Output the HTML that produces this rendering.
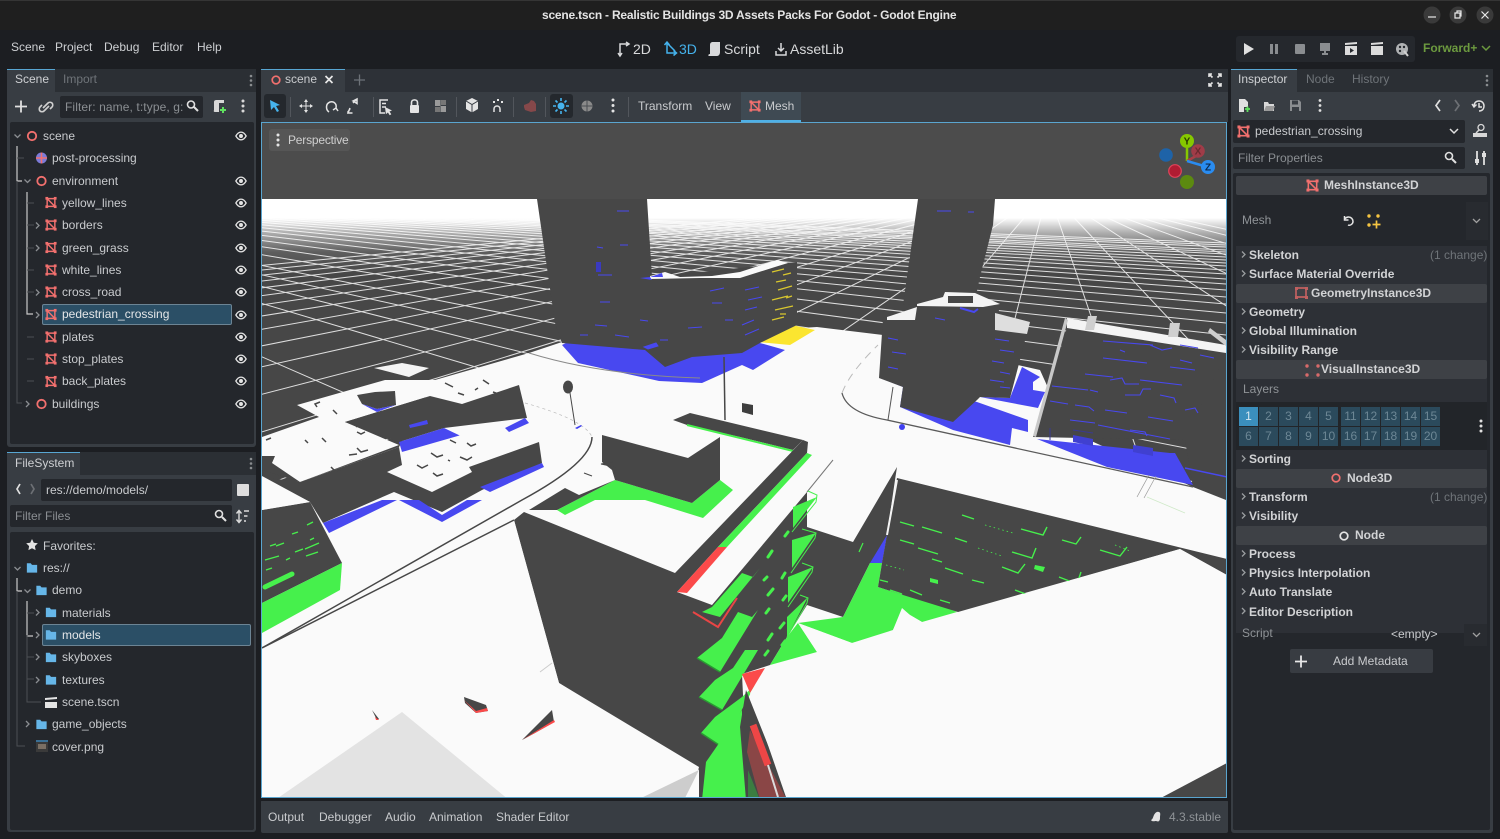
<!DOCTYPE html>
<html><head><meta charset="utf-8"><title>scene.tscn - Godot Engine</title>
<style>
html,body{margin:0;padding:0;background:#1c1e22;width:1500px;height:839px;overflow:hidden}
#r{position:relative;width:1500px;height:839px;overflow:hidden;font-family:"Liberation Sans",sans-serif;font-size:12px;color:#ced0d3}
.b{position:absolute}
.t{position:absolute;white-space:nowrap;line-height:16px;height:16px}
.d{color:#6f7479}
.h{font-weight:bold;color:#d2d3d5;font-size:12px}
.c{color:#c9cbce}
svg{position:absolute;overflow:visible}
.cell{position:absolute;width:19px;height:19px;background:#2b4a5c;color:#6d8795;text-align:center;line-height:19px;font-size:12px}
.cat{position:absolute;left:1236px;width:251px;height:19px;background:#3e4146;border-radius:2px}
</style></head><body><div id="r">

<!-- title + menu backgrounds -->
<div class="b" style="left:0;top:0;width:1500px;height:30px;background:#1f1f1f;border-top:1px solid #353535;box-sizing:border-box"></div>
<div class="t" style="left:542px;top:7px;font-weight:bold;color:#e4e4e4;font-size:12px;letter-spacing:-.21px">scene.tscn - Realistic Buildings 3D Assets Packs For Godot - Godot Engine</div>
<svg style="left:0;top:0" width="1500" height="30">
<g fill="#3a3a3a"><circle cx="1432" cy="15" r="8.5"/><circle cx="1458" cy="15" r="8.5"/><circle cx="1485" cy="15" r="8.5"/></g>
<g stroke="#e8e8e8" stroke-width="1.2" fill="none"><path d="M1428 17h8"/><path d="M1455 13h5v5h-5zM1457 13v-2h4v5h-1"/><path d="M1481.500 11.500l7 7M1488.500 11.500l-7 7"/></g>
</svg>
<div class="t" style="left:11px;top:39px">Scene</div>
<div class="t" style="left:55px;top:39px">Project</div>
<div class="t" style="left:104px;top:39px">Debug</div>
<div class="t" style="left:152px;top:39px">Editor</div>
<div class="t" style="left:197px;top:39px">Help</div>
<div class="t" style="left:633px;top:41px;font-size:14px;color:#d8d9db">2D</div>
<div class="t" style="left:679px;top:41px;font-size:14px;color:#45b2ec">3D</div>
<div class="t" style="left:724px;top:41px;font-size:14px;color:#d8d9db">Script</div>
<div class="t" style="left:790px;top:41px;font-size:14px;color:#d8d9db">AssetLib</div>
<svg style="left:610px;top:40px" width="240" height="20">
<g fill="none" stroke="#d8d9db" stroke-width="1.500"><path d="M10 15V4h8M16 2l3 2-3 2M8 13l2 3 2-3"/></g>
<g fill="none" stroke="#45b2ec" stroke-width="1.500"><path d="M57 3v10h9M54.500 5L57 2l2.500 3M63.500 10.500l3 2.500-3 2.500M58 4l7 7"/></g>
<path d="M100 14V5c0-2 1-3 3-3h7v10c0 2-1 4-3 4h-8c-1 0-1-2 1-2z" fill="#d8d9db"/>
<path d="M171 3v8M168 8l3 3 3-3M166 11v4h10v-4" fill="none" stroke="#d8d9db" stroke-width="1.500"/>
</svg>

<div class="b" style="left:1236px;top:36px;width:179px;height:26px;background:#25282d;border-radius:3px"></div>
<svg style="left:1240px;top:40px" width="175" height="18">
<path d="M4 3l10 6-10 6z" fill="#e0e0e0"/>
<path d="M30 4h3v10h-3zM35 4h3v10h-3z" fill="#8a8d90"/>
<rect x="55" y="4" width="10" height="10" rx="1" fill="#8a8d90"/>
<path d="M80 3h10v8h-4v2h2v2h-6v-2h2v-2h-4z" fill="#8a8d90"/>
<path d="M105 6h12v9h-12zM105 3l12-1v2l-12 1zM110 8v5l4-2.500z" fill="#dcdcdc"/>
<path d="M131 6h12v9h-12zM131 3l12-1v2l-12 1z" fill="#dcdcdc"/>
<circle cx="162" cy="9" r="6" fill="#b0b2b4"/><circle cx="160" cy="7" r="1.200" fill="#25282d"/><circle cx="164" cy="7" r="1.200" fill="#25282d"/><circle cx="160" cy="11" r="1.200" fill="#25282d"/><path d="M164 11l4 5" stroke="#d0d0d0" stroke-width="2"/>
</svg>
<div class="t" style="left:1423px;top:40px;font-weight:bold;color:#6c9a3f;font-size:12px">Forward+</div>
<svg style="left:1481px;top:45px" width="10" height="8"><path d="M1 1l4 4 4-4" fill="none" stroke="#6c9a3f" stroke-width="1.500"/></svg>

<!-- LEFT DOCK SCENE -->
<div class="b" style="left:7px;top:69px;width:249px;height:378px;background:#383d43;border-radius:3px"></div>
<div class="b" style="left:7px;top:69px;width:249px;height:23px;background:#2b2f34"></div>
<div class="b" style="left:7px;top:69px;width:48px;height:23px;background:#383d43;border-top:1px solid #58a6d2;box-sizing:border-box"></div>
<div class="t" style="left:15px;top:71px">Scene</div>
<div class="t d" style="left:63px;top:71px">Import</div>
<svg style="left:248px;top:74px" width="6" height="14"><g fill="#8a8d90"><circle cx="3" cy="2" r="1.300"/><circle cx="3" cy="6.500" r="1.300"/><circle cx="3" cy="11" r="1.300"/></g></svg>
<div class="b" style="left:60px;top:96px;width:143px;height:22px;background:#24272c;border-radius:2px"></div>
<div class="t d" style="left:65px;top:99px;color:#8a8e92;letter-spacing:.1px">Filter: name, t:type, g:</div>
<svg style="left:14px;top:98px" width="235" height="18">
<path d="M1 8.500h12M7 2.500v12" stroke="#e0e0e0" stroke-width="1.800"/>
<path d="M27 10l5-5c1-1 3-1 4 0s1 3 0 4l-2 2M33 8l-5 5c-1 1-3 1-4 0s-1-3 0-4l2-2" transform="translate(2 0)" fill="none" stroke="#d0d0d0" stroke-width="1.600"/>
<circle cx="177" cy="6.500" r="3.500" fill="none" stroke="#e0e0e0" stroke-width="1.600"/><path d="M180 9l4 4" stroke="#e0e0e0" stroke-width="2"/>
<path d="M200 4c0-2 2-2 3-2h7v3h-5v9h-4c-2 0-1-2-1-2z" fill="#d8d8d8"/><path d="M206 12h6M209 9v6" stroke="#5fe05f" stroke-width="2"/>
<g fill="#d8d8d8"><circle cx="229" cy="3" r="1.500"/><circle cx="229" cy="8" r="1.500"/><circle cx="229" cy="13" r="1.500"/></g>
</svg>
<div class="b" style="left:10px;top:122px;width:244px;height:322px;background:#24272c;border-radius:2px"></div>
<div class="b" style="left:42px;top:304px;width:190px;height:21px;background:#2b4f66;border:1px solid #6c8494;box-sizing:border-box;border-radius:2px"></div>

<svg width="0" height="0" style="position:absolute">
<defs>
<symbol id="m" viewBox="0 0 14 14"><path d="M2.500 2.500h9v9h-9zM2.500 2.500l9 9" fill="none" stroke="#f2706e" stroke-width="1.700"/><g fill="#f2706e"><rect x="0.500" y="0.500" width="3.200" height="3.200"/><rect x="10.300" y="0.500" width="3.200" height="3.200"/><rect x="0.500" y="10.300" width="3.200" height="3.200"/><rect x="10.300" y="10.300" width="3.200" height="3.200"/></g></symbol>
<symbol id="e" viewBox="0 0 14 14"><path d="M1 7c2-3.500 4-4.500 6-4.500S11 3.500 13 7c-2 3.500-4 4.500-6 4.500S3 10.500 1 7z" fill="none" stroke="#e4e4e4" stroke-width="1.500"/><circle cx="7" cy="7" r="2.300" fill="#e4e4e4"/></symbol>
<symbol id="f" viewBox="0 0 14 14"><path d="M1 2h4.500l1.500 2h6v9H1z" fill="#66b6e8"/></symbol>
</defs></svg>

<svg style="left:0;top:122px" width="260" height="322">
<g stroke="#c9c9c9" stroke-width="1.200" fill="none"><path d="M17 24v35h5"/><path d="M27 70v122h6"/></g>
<g stroke="#4c4f53" fill="none"><path d="M17 36h7M17 59v222h5M27 81h7M27 103h7M27 126h7M27 148h7M27 170h7M27 215h7M27 237h7M27 259h7"/></g>
<g fill="none" stroke="#8b8e92" stroke-width="1.300"><path d="M14.500 12.500l3 3 3-3M24.500 57.500l3 3 3-3"/><path d="M36 100.500l3 3-3 3M36 123l3 3-3 3M36 167.500l3 3-3 3M36 190l3 3-3 3M26 279l3 3-3 3"/></g>
<g fill="none" stroke="#f2706e" stroke-width="1.800"><circle cx="32" cy="14" r="4.200"/><circle cx="41.500" cy="59" r="4.200"/><circle cx="41.500" cy="282" r="4.200"/></g>
<circle cx="41.500" cy="36" r="5.500" fill="#7c7bd8"/><path d="M36 36h11M41.500 30.500v11" stroke="#f2706e" stroke-width="1.500"/>
<g fill="none">
<use href="#m" x="45" y="74.500" width="12" height="12"/><use href="#m" x="45" y="97" width="12" height="12"/><use href="#m" x="45" y="119.500" width="12" height="12"/><use href="#m" x="45" y="142" width="12" height="12"/><use href="#m" x="45" y="164" width="12" height="12"/><use href="#m" x="45" y="186.500" width="12" height="12"/><use href="#m" x="45" y="209" width="12" height="12"/><use href="#m" x="45" y="231" width="12" height="12"/><use href="#m" x="45" y="253.500" width="12" height="12"/>
</g>
<g>
<use href="#e" x="235" y="8" width="12" height="12"/><use href="#e" x="235" y="53" width="12" height="12"/><use href="#e" x="235" y="75" width="12" height="12"/><use href="#e" x="235" y="97" width="12" height="12"/><use href="#e" x="235" y="120" width="12" height="12"/><use href="#e" x="235" y="142" width="12" height="12"/><use href="#e" x="235" y="164" width="12" height="12"/><use href="#e" x="235" y="187" width="12" height="12"/><use href="#e" x="235" y="209" width="12" height="12"/><use href="#e" x="235" y="231" width="12" height="12"/><use href="#e" x="235" y="253" width="12" height="12"/><use href="#e" x="235" y="276" width="12" height="12"/>
</g>
</svg>
<div class="t c" style="left:43px;top:128px">scene</div>
<div class="t c" style="left:52px;top:150px">post-processing</div>
<div class="t c" style="left:52px;top:173px">environment</div>
<div class="t c" style="left:62px;top:195px">yellow_lines</div>
<div class="t c" style="left:62px;top:217px">borders</div>
<div class="t c" style="left:62px;top:240px">green_grass</div>
<div class="t c" style="left:62px;top:262px">white_lines</div>
<div class="t c" style="left:62px;top:284px">cross_road</div>
<div class="t" style="left:62px;top:306px;color:#e4e6e8">pedestrian_crossing</div>
<div class="t c" style="left:62px;top:329px">plates</div>
<div class="t c" style="left:62px;top:351px">stop_plates</div>
<div class="t c" style="left:62px;top:373px">back_plates</div>
<div class="t c" style="left:52px;top:396px">buildings</div>

<!-- FILESYSTEM -->
<div class="b" style="left:7px;top:452px;width:249px;height:380px;background:#383d43;border-radius:3px"></div>
<div class="b" style="left:7px;top:452px;width:249px;height:23px;background:#2b2f34"></div>
<div class="b" style="left:7px;top:452px;width:73px;height:23px;background:#383d43;border-top:1px solid #58a6d2;box-sizing:border-box"></div>
<div class="t" style="left:15px;top:455px">FileSystem</div>
<svg style="left:248px;top:457px" width="6" height="14"><g fill="#8a8d90"><circle cx="3" cy="2" r="1.300"/><circle cx="3" cy="6.500" r="1.300"/><circle cx="3" cy="11" r="1.300"/></g></svg>
<div class="b" style="left:41px;top:479px;width:191px;height:22px;background:#24272c;border-radius:2px"></div>
<div class="t c" style="left:46px;top:482px">res://demo/models/</div>
<div class="b" style="left:237px;top:484px;width:12px;height:12px;background:#dedede;border-radius:1px"></div>
<div class="b" style="left:10px;top:505px;width:222px;height:22px;background:#24272c;border-radius:2px"></div>
<div class="t" style="left:15px;top:508px;color:#8a8e92">Filter Files</div>
<svg style="left:10px;top:482px" width="240" height="44">
<path d="M10 2l-3 5 3 5" fill="none" stroke="#e0e0e0" stroke-width="1.700"/><path d="M21 2l3 5-3 5" fill="none" stroke="#6d7075" stroke-width="1.700"/>
<circle cx="209" cy="32" r="3.500" fill="none" stroke="#e0e0e0" stroke-width="1.600"/><path d="M212 35l4 4" stroke="#e0e0e0" stroke-width="2"/>
<path d="M229 29v11M226.500 31.500l2.500-3 2.500 3M226.500 37.500l2.500 3 2.500-3M234 29h5M234 34h3.500M234 39h2" fill="none" stroke="#dcdcdc" stroke-width="1.400"/>
</svg>
<div class="b" style="left:10px;top:532px;width:244px;height:298px;background:#24272c;border-radius:2px"></div>
<div class="b" style="left:42px;top:624px;width:209px;height:22px;background:#2b4f66;border:1px solid #6c8494;box-sizing:border-box;border-radius:2px"></div>
<svg style="left:0;top:532px" width="260" height="298">
<g stroke="#c9c9c9" stroke-width="1.200" fill="none"><path d="M17 46v13h5"/><path d="M27 69v35h6"/></g>
<g stroke="#4c4f53" fill="none"><path d="M17 59v155h8M27 81h7M27 103v67h14M27 125h7M27 147h7"/></g>
<g fill="none" stroke="#8b8e92" stroke-width="1.300"><path d="M14.500 35l3 3 3-3M24.500 57.500l3 3 3-3"/><path d="M36 77.500l3 3-3 3M36 100l3 3-3 3M36 122l3 3-3 3M36 145l3 3-3 3M26 189l3 3-3 3"/></g>
<path d="M32 7l1.800 3.700 4 .6-2.900 2.800.7 4-3.600-1.900-3.600 1.900.7-4-2.900-2.800 4-.6z" fill="#e4e4e4"/>
<use href="#f" x="26" y="29.500" width="12" height="12"/><use href="#f" x="35.500" y="52" width="12" height="12"/>
<use href="#f" x="45" y="74" width="12" height="12"/><use href="#f" x="45" y="96.500" width="12" height="12"/><use href="#f" x="45" y="119" width="12" height="12"/><use href="#f" x="45" y="141.500" width="12" height="12"/>
<path d="M45 170h12v6H45zM45 166l12-1v2l-12 1z" fill="#e4e4e4"/>
<use href="#f" x="35.500" y="186" width="12" height="12"/>
<rect x="36" y="208" width="12" height="12" fill="#3a3a3a"/><rect x="36" y="208" width="12" height="2" fill="#3a6f95"/><rect x="38" y="212" width="8" height="5" fill="#7a6f64"/>
</svg>
<div class="t c" style="left:43px;top:538px">Favorites:</div>
<div class="t c" style="left:43px;top:560px">res://</div>
<div class="t c" style="left:52px;top:582px">demo</div>
<div class="t c" style="left:62px;top:605px">materials</div>
<div class="t" style="left:62px;top:627px;color:#e4e6e8">models</div>
<div class="t c" style="left:62px;top:649px">skyboxes</div>
<div class="t c" style="left:62px;top:672px">textures</div>
<div class="t c" style="left:62px;top:694px">scene.tscn</div>
<div class="t c" style="left:52px;top:716px">game_objects</div>
<div class="t c" style="left:52px;top:739px">cover.png</div>

<!-- CENTER TABS + TOOLBAR -->
<div class="b" style="left:261px;top:69px;width:967px;height:53px;background:#2d3137"></div>
<div class="b" style="left:261px;top:92px;width:967px;height:30px;background:#383d43"></div>
<div class="b" style="left:261px;top:69px;width:84px;height:23px;background:#383d43;border-top:1px solid #58a6d2;box-sizing:border-box"></div>
<svg style="left:261px;top:69px" width="110" height="23">
<circle cx="15" cy="11" r="3.800" fill="none" stroke="#f2706e" stroke-width="1.700"/>
<path d="M64.500 7l7 7M71.500 7l-7 7" stroke="#e8e8e8" stroke-width="1.700"/>
<path d="M93 11h11M98.500 5.500v11" stroke="#6d7278" stroke-width="1.300"/>
</svg>
<div class="t c" style="left:285px;top:71px">scene</div>
<svg style="left:1208px;top:73px" width="14" height="14"><path d="M1 4V1h3M10 1h3v3M13 10v3h-3M4 13H1v-3M1 1l3.500 3.500M13 1L9.500 4.500M13 13L9.500 9.500M1 13l3.500-3.500" fill="none" stroke="#e4e4e4" stroke-width="1.600"/></svg>
<div class="b" style="left:741px;top:92px;width:60px;height:30px;background:#3f4a53;border-bottom:2px solid #4fb0e6;box-sizing:border-box"></div>
<div class="b" style="left:264px;top:94px;width:22px;height:24px;background:#24282d;border-radius:3px"></div>
<div class="b" style="left:550px;top:94px;width:23px;height:24px;background:#24282d;border-radius:3px"></div>
<svg style="left:261px;top:92px" width="560" height="30">
<g stroke="#52565c"><path d="M29.500 5v20M112.500 5v20M195.500 5v20M252.500 5v20M284.500 5v20M367.500 5v20"/></g>
<path d="M9 8l10 5-4 1 3 5-2 1-3-5-3 3z" fill="#46b4ee"/>
<g fill="none" stroke="#e4e4e4" stroke-width="1.500">
<path d="M41 14h8M45 10v8" stroke-width="1"/><path d="M43 10l2-3 2 3zM43 18l2 3 2-3zM41 12l-3 2 3 2zM49 12l3 2-3 2z" fill="#e4e4e4" stroke="none"/>
<path d="M68 20c-3-2-4-8 1-10 4-1 7 2 6 6M72 18l3-2 2 3"/>
<path d="M92 9l4-2v4.500zM95 8l-3 3M89 16l-2 5h4.500M89 17l-2.500 3.500"/>
<path d="M127 8h-8v13h5M121 11.500h4M121 15h4"/>
</g>
<path d="M124 15l7 3.500-2.500 1 1.800 2.800-1.600 1-1.800-2.800-2 1.700z" fill="#e4e4e4"/>
<rect x="149" y="13" width="9" height="8" rx="1" fill="#e4e4e4"/><path d="M150.500 13v-2.500c0-3.500 6-3.500 6 0V13" fill="none" stroke="#e4e4e4" stroke-width="1.600"/>
<path d="M174 8h5.500v6H174z M179.500 14h5.500v6h-5.500z" fill="#9a9a9a"/><path d="M180 8h5v5h-5z M174 15h5v5h-5z" fill="#777"/>
<path d="M205 9l6-3 6 3v8l-6 3.500-6-3.500z" fill="#e4e4e4"/><path d="M205 9l6 3.500 6-3.500M211 12.500v8" stroke="#383d43" stroke-width="1" fill="none"/>
<g fill="#e4e4e4"><rect x="232" y="9" width="2" height="2"/><rect x="236" y="7" width="2" height="2"/><rect x="240" y="9" width="2" height="2"/></g><path d="M233 20v-3c0-4 6-4 6 0v3" fill="none" stroke="#e4e4e4" stroke-width="1.500"/>
<path d="M263 13l5-2 2-3 3 1 2 3v7l-5 1-6-2-1-3z" fill="#86484a"/>
<circle cx="300" cy="14" r="3.500" fill="#46b4ee"/><g stroke="#46b4ee" stroke-width="1.600"><path d="M300 6v3M300 19v3M292 14h3M305 14h3M294.500 8.500l2 2M305.500 8.500l-2 2M294.500 19.500l2-2M305.500 19.500l-2-2"/></g>
<circle cx="326" cy="14" r="5.500" fill="#8a8a8a"/><path d="M320 14h12M326 8.500v11" stroke="#4a4d52"/>
<g fill="#e4e4e4"><circle cx="352" cy="8" r="1.500"/><circle cx="352" cy="13.500" r="1.500"/><circle cx="352" cy="19" r="1.500"/></g>
<use href="#m" x="488" y="8" width="12" height="12"/>
</svg>
<div class="t c" style="left:638px;top:98px">Transform</div>
<div class="t c" style="left:705px;top:98px">View</div>
<div class="t c" style="left:765px;top:98px">Mesh</div>

<!-- VIEWPORT -->
<svg style="left:262px;top:122px;overflow:hidden" width="964" height="675" viewBox="262 122 964 675">
<defs><linearGradient id="fade" gradientUnits="userSpaceOnUse" x1="0" y1="199" x2="0" y2="275"><stop offset="0" stop-color="#fff"/><stop offset=".25" stop-color="#fff"/><stop offset=".45" stop-color="#fff" stop-opacity=".55"/><stop offset=".7" stop-color="#fff" stop-opacity=".12"/><stop offset="1" stop-color="#fff" stop-opacity="0"/></linearGradient></defs>
<rect x="262" y="199" width="964" height="600" fill="#474747"/>
<g stroke="#dedede" stroke-width="1" fill="none">
<path d="M-120 190L1226 456M-120 190L1226 418M-120 190L1226 390M-120 190L1226 368M-120 190L1226 350M-120 190L1226 335M-120 190L1226 323M-120 190L1226 313M-120 190L1226 304M-120 190L1226 297M-120 190L1226 290M-120 190L1226 284M-120 190L1226 279M-120 190L1226 274M-120 190L1226 270M-120 190L1226 266M-120 190L1226 263M-120 190L1226 260M-120 190L1226 257M-120 190L1226 254M-120 190L1226 252M-120 190L1226 250M-120 190L1226 247M-120 190L1226 245M-120 190L1226 243M-120 190L1226 489M-120 190L1226 530M-120 190L1226 590M-120 190L1226 778"/>
<path d="M1048 190L891 800M1048 190L526 800M1048 190L161 800M1048 190L-204 800M1048 190L-569 800M1048 190L-934 800M1048 190L-1299 800M1048 190L-1664 800M1048 190L-2029 800M1048 190L-2394 800M1048 190L-2759 800M1048 190L-3124 800M1048 190L-3489 800M1048 190L-3854 800M1048 190L-4219 800M1048 190L-4584 800M1048 190L-4949 800M1048 190L-5314 800M1048 190L1256 800M1048 190L1621 800M1048 190L1986 800M1048 190L2351 800M1048 190L2716 800M1048 190L3081 800M1048 190L3446 800M1048 190L3811 800"/>
</g>
<rect x="262" y="199" width="964" height="80" fill="url(#fade)"/>
<rect x="262" y="122" width="964" height="77" fill="#4c4c4c"/>

<!-- white ground -->
<path d="M435 380L529 353L562 342L817 327L883 335L1040 370L1067 430L1193 487L1227 495V800H262V480L300 482L399 447Z" fill="#fafafa"/>
<path d="M1067 318L1226 345V354L1067 330Z" fill="#f4f4f4"/>
<path d="M1088 316h9l-3 14h-9zM1170 323h10l-2 14h-10z" fill="#cfcfcf"/>
<path d="M1210 328l16 12v6l-18-14z" fill="#cfcfcf"/>

<!-- right building wall -->
<path d="M1067 328L1226 353V500L1185 440L1033 437Z" fill="#474747"/>
<path d="M1226 353V500L1193 487L1185 440Z" fill="#474747"/>
<path d="M1065 318l3 2-32 117-3-1z" fill="#c8c8c8"/>
<path d="M1037 439L1170 453L1175 453L1193 485L1107 467Z" fill="#4848f0"/>
<path d="M1185 468L1227 477" stroke="#4848f0" stroke-width="1.500"/>
<g stroke="#4848f0" stroke-width="1.100" fill="none">
<path d="M1103 341l50 4M1103 358l44 5M1170 367l25 3M1085 374l28 3M1140 380l42 5M1052 386l36 4M1050 401l18 3M1105 410l22 3M1148 417l25 4M1098 425l72 14M1120 350l5 2M1180 345l18 3M1180 360l12 3"/>
<path d="M1110 380l12-2 3 6 14 0M1125 395l15 0 3-6 8 0M1075 405l14 2 5 4M1160 395l14 3 2 5M1070 420l25 3M1130 430l15 2 2 4M1185 410l10-2 3 5M1150 345l12 5 10-2M1200 355l14 3M1090 390l8 2"/>
</g>
<path d="M1073 435l20 4v7l-20-4zM1133 445l20 3v8l-20-4z" fill="#4040d0"/>
<path d="M1073 430l20 3M1050 428v12" stroke="#3a3a90"/>

<!-- back building + block -->
<path d="M562 345L578 363L659 381L702 383L742 365L753 370L785 350L760 343L740 345L650 300Z" fill="#4848f0"/>
<path d="M758 342L792 325L815 330L790 345Z" fill="#fbe530"/>
<path d="M537 199L647 199L652 277L797 262L797 325L760 343L742 353L692 357L665 367L645 350L562 343L555 323Z" fill="#474747"/>
<path d="M650 276L665 272L680 277L712 276L740 272L777 260L788 263L775 267L740 278L700 278L650 279Z" fill="#fafafa"/>
<path d="M650 277l12-4 1 4zM640 278l10-1 2 3z" fill="#4848f0"/>
<g stroke="#4848f0" stroke-width="1" fill="none"><path d="M617 211l12 0M620 245l8 0M597 247l6 1M598 275l14 0M600 302l10 0M595 325l12 1M710 291l14-3M712 303l10 0M745 290l14-3M748 300l14-3M745 310l12-3M742 325l12-5M725 320l8 0M640 320l8 1M688 328l14-1M745 335l14-6M615 335l14 2"/></g>
<path d="M596 262h5v10h-5z" fill="#3a3ac0"/>
<g stroke="#d9c72e" stroke-width="1.200" fill="none"><path d="M776 282l10-2M778 290l14-4M772 300l16-4M775 310l18-4M772 320l12-3M786 298l6-2M772 272l12-3M783 275l8-2M780 314l6 0"/></g>
<path d="M644 347l12-4 2 3-10 3zM580 335l8 0M660 340l8 0" fill="#4848f0" stroke="#4848f0"/>

<!-- near right tall building -->
<path d="M880 378L903 387L900 407L953 430L1010 445L1012 428L1028 432L1028 420L977 402Z" fill="#4848f0"/>
<path d="M980 397L1010 398L1022 367L1040 377L1033 382L1033 390L1045 392L1038 408Z" fill="#4848f0"/>
<path d="M918 199L995 199L993 225L988 245L980 277L975 300L903 305Z" fill="#474747"/>
<path d="M883 318L917 307L1000 305L995 330L1027 333L1010 398L980 397L977 400L953 422L900 407L903 387L879 378Z" fill="#474747"/>
<path d="M887 317L917 307L915 320L887 320ZM917 304L943 297L945 292L975 293L1000 304L983 307L917 306Z" fill="#f4f4f4"/>
<path d="M995 313L1030 322L1027 334L995 330Z" fill="#dedede"/>
<rect x="948" y="296" width="25" height="7" fill="#474747"/>
<g stroke="#4848f0" stroke-width="1.100" fill="none"><path d="M968 212l6 0M937 211l14 0M995 339l14 2M1000 350l14 2M992 361l12 2M1000 372l10 2M990 380l14 2M1000 387l10 1M888 338l10 2M892 352l14 2M888 367l10 2M935 318l10 2"/></g>
<path d="M960 308l14 4 4-3" stroke="#4848f0" stroke-width="2" fill="none"/>
<path d="M893 387L888 420" stroke="#555" stroke-width="1"/>
<circle cx="902" cy="427" r="3" fill="#4040f0"/>

<!-- road edges -->
<path d="M842 393Q847 413 887 420L1193 487" fill="none" stroke="#5a5a5a" stroke-width="1.300"/>
<path d="M842 393Q850 372 878 345" fill="none" stroke="#bbb" stroke-width="1" stroke-dasharray="8 6"/>
<path d="M529 353Q600 375 700 378" fill="none" stroke="#8a8a8a" stroke-width="1"/>
<path d="M592 437Q592 462 522 500L262 648" fill="none" stroke="#474747" stroke-width="1.500"/>
<path d="M525 403Q585 420 592 437" fill="none" stroke="#bbb" stroke-width=".7" stroke-dasharray="3 3"/>
<path d="M724 357L725 420" stroke="#474747" stroke-width="1.500"/>
<path d="M742 403l11 2v10l-11-3z" fill="#3e3e3e"/>
<ellipse cx="568" cy="387" rx="5" ry="6.500" fill="#474747"/><path d="M570 393L575 425" stroke="#474747"/><path d="M575 428l6-3 1 1-5 3z" fill="#4040f0"/>

<!-- left blocks -->
<path d="M374 368L402 363L429 368L409 377Z" fill="#f4f4f4"/>
<path d="M297 405L385 380L435 380L519 385L462 403L430 396L345 422L399 445L300 482L262 460V437L319 417Z" fill="#fafafa"/>
<path d="M262 456L275 456L272 463L300 482L262 470Z" fill="#474747"/>
<path d="M345 422L430 396L462 404L519 385L527 418L444 428L399 442Z" fill="#474747"/>
<path d="M505 428L525 418L529 423L509 432ZM399 442L444 428L465 438L402 452ZM409 425L427 420L428 424L410 428Z" fill="#4848f0"/>
<path d="M357 395L375 392L395 391L396 405L377 409L362 404Z" fill="#474747"/>
<path d="M362 404L377 409L396 405L377 412Z" fill="#4848f0"/>
<path d="M402 452L489 427L539 442L469 467L474 472L432 492L387 472L405 463Z" fill="#fafafa"/>
<path d="M262 477L300 482L399 447L402 465L387 472L432 492L472 472L469 467L539 442L542 463L482 490L442 512L394 492L323 523L310 502Z" fill="#474747"/>
<path d="M262 510l48-8 32 61-80 40Z" fill="#474747"/>
<path d="M262 476L310 502L262 510Z" fill="#fafafa"/>
<path d="M323 523L382 500L397 500L329 533ZM399 500L442 522L482 500L467 500L442 515L419 500ZM542 463L544 467L490 492L480 487Z" fill="#4848f0"/>
<path d="M342 563L340 590L262 633V603Z" fill="#46f04c"/>
<g stroke="#47f04c" stroke-width="1.300" fill="none"><path d="M266 570l6-2M292 534l6-2M307 525l6-3M270 546l6-2M276 546l8-3M310 540l4-2M265 560l14-4M286 560l4-2M295 552l8-3M305 549l14-6M306 556l12-4"/></g>
<path d="M265 587L292 574" stroke="#47f04c" stroke-width="5" stroke-linecap="round"/>
<g stroke="#474747" stroke-width="1.500" fill="none"><path d="M445 383l8 4M483 380l6 4M478 388l-3 2M493 392l8 3M458 393l6 2M320 402l-5 2 2 3M333 410l4 4M354 423l3 4M357 432l4 2 4-2M382 436l8 3M357 448l4 4 7-2M331 467l4 4 8-2 M349 455l8-1M322 438l4 4M305 440l3 3M266 440l5-2M431 453l6 4 6-2M467 443l4 3 5-2M450 440l6 3M460 457l7 3 5-3M433 473l4 3 6-2M448 460l2 1M417 465l5 3 6-3"/></g>

<!-- mid block -->
<path d="M524 512L620 470L740 437L793 450L672 572Z" fill="#fafafa"/>
<path d="M557 510L615 480L692 503L720 480L733 490L703 518L645 500L595 500L565 515Z" fill="#46f04c"/>
<path d="M602 435L688 458L720 437L720 480L692 503L615 480L612 470L602 462Z" fill="#474747"/>
<path d="M529 510L565 488L579 495L615 480L557 510Z" fill="#474747"/>
<path d="M601 464l11-2 3 5zM584 473l8 3" stroke="#474747" fill="#474747"/>
<path d="M673 420L690 413L803 440L793 450L740 437L687 425Z" fill="#474747"/>
<path d="M687 425L793 451" stroke="#46f04c" stroke-width="2"/>

<!-- big dark wall -->
<path d="M514 520L524 512L675 573L803 440L808 442L807 453L718 547L677 592L712 605L807 492L807 527L853 542L897 467L895 480L887 535L882 563L870 563L843 617L807 605L787 637L770 665L742 674L748 800H690L699 767L559 683Z" fill="#474747"/>
<path d="M807 453L812 455L727 547L718 547Z" fill="#46f04c"/>
<path d="M727 547L687 593L677 592L718 547Z" fill="#fb4a4a"/>
<path d="M693 612l25 15 19-29" stroke="#e94545" stroke-width="2" fill="none"/>
<path d="M833 460L807 492" stroke="#777" stroke-width="1"/>

<!-- green floor -->
<path d="M870 563L882 563L878 587L903 595L903 590L957 612L922 622L910 615L902 610L893 630L852 643L798 623L843 617Z" fill="#46f04c"/>
<path d="M798 623L817 652L770 665L787 637Z" fill="#46f04c"/>
<path d="M870 563L882 563L887 535Z" fill="#4848f0"/>
<path d="M798 623L852 643L817 652Z" fill="#fafafa"/>
<path d="M902 608L910 615L922 622L893 630Z" fill="#fafafa"/>

<!-- dark wall right with dashes -->
<path d="M897 478L1227 559V575L1180 549L958 612L903 595L878 587L882 563L887 535Z" fill="#474747"/>
<path d="M897 480L887 535" stroke="#f4f4f4" stroke-width="2"/>
<g stroke="#46f04c" stroke-width="1.400" fill="none"><path d="M900 522l14 4M922 527l20 6M962 515l12 4M900 540l14 4M918 548l20 6M955 538l12 4M1021 529l22 6 4-8M1062 540l14 4 5-7M1100 550l20 6 7-9M945 568l18 6M972 580l12 3M1012 552l20 6 4-10M1002 567l16 6 7-9M1015 590l16 6M1059 577l18 7 4-12M932 559l10 3M880 580l8 2M890 590l12 4M910 590l12 5M940 600l10 3M1050 590l14 4"/></g>
<path d="M930 578l8 2v4l-8-2zM1035 565l10 2-2 5-9-3z" fill="#46f04c"/>
<g stroke="#46f04c" stroke-width=".8" stroke-dasharray="1.500 3" fill="none"><path d="M985 525l28 8M978 548l24 8M886 565l18 5M1115 545l15 6"/></g>

<!-- green ledges -->
<path d="M702 612L712 607L742 573L753 577L760 568L720 617ZM697 658L722 638L738 612L752 617L758 610L720 672ZM699 697L715 680L733 668L745 650L758 650L722 710ZM701 733L715 717L742 697L755 685L722 747Z" fill="#46f04c"/>
<path d="M697 658L720 672M699 697L722 710M701 733L722 747" stroke="#2a9a33" stroke-width="1.500" fill="none"/>
<path d="M793 507L817 497L793 528ZM792 540L816 533L792 568ZM788 577L813 567L788 603ZM787 617L808 597L787 637Z" fill="#46f04c"/>
<g fill="none" stroke="#46f04c" stroke-width="1"><path d="M808 491l9 4-1 7-24 30M802 529l14 4-1 5-24 35M802 563l11 4-1 5-24 35M800 595l8 3-1 5-20 34"/></g>
<g stroke="#46f04c" stroke-width="3" stroke-linecap="round" fill="none"><path d="M768 557l4-6M785 536l3-4M768 595l5-6M782 578l3-5M766 613l3-4M783 600l3-4M768 640l4-6M780 628l4-5M765 655l3-4M782 645l3-4M764 580l3-3"/></g>
<path d="M859 552l4-9" stroke="#46f04c" stroke-width="1.200"/>
<path d="M702 800L706 762L742 710V800Z" fill="#46f04c"/>
<path d="M740 727L746 690L790 800H742Z" fill="#474747"/>
<path d="M740 727V800H746Z" fill="#46f04c"/>
<path d="M750 730L787 800H760L747 752Z" fill="#8a4646"/>
<path d="M753 725L768 765" stroke="#ee4646" stroke-width="7"/>
<path d="M748 770L760 800H748Z" fill="#3b7d41"/>
<path d="M768 765L778 797" stroke="#ddd" stroke-width="2"/>

<!-- large white roof -->
<path d="M765 668L1180 549L1227 575V763L1157 800H787L750 693Z" fill="#fafafa"/>
<path d="M742 674L765 668L750 693Z" fill="#fb4a4a"/>
<path d="M1147 497l38 16" stroke="#cfe9c8" stroke-width=".8"/>
<path d="M1137 497l12-22M1144 498l12-22" stroke="#999" stroke-width=".7"/>

<!-- lower white roof -->
<path d="M262 800V648L514 520L559 683L699 770V800Z" fill="#fafafa"/>
<path d="M540 672L552 663" stroke="#ccc"/>
<path d="M275 800L402 712L509 800Z" fill="#e3e3e3"/>
<path d="M637 800L699 770L684 800Z" fill="#cdcdcd"/>
<path d="M464 697L486 705L488 711L476 713L465 703Z" fill="#474747"/>
<path d="M464 700L476 711L487 708L488 711L476 713Z" fill="#fb4a4a"/>
<path d="M522 740L552 710L554 722L535 733Z" fill="#474747"/>
<path d="M522 740L554 720L555 722L535 733Z" fill="#fb4a4a"/>
<path d="M372 710L379 719L377 720Z" fill="#474747"/>
<path d="M375 717l4 3-3 0z" fill="#fb4a4a"/>
<path d="M262 648L514 520" stroke="#474747" stroke-width="1.500"/>
<path d="M1157 800L1227 763V800Z" fill="#474747"/>
</svg>
<div class="b" style="left:261px;top:122px;width:966px;height:676px;border:1px solid #5aa5cf;box-sizing:border-box"></div>
<div class="b" style="left:269px;top:129px;width:81px;height:22px;background:#565656;border-radius:3px"></div>
<svg style="left:275px;top:133px" width="6" height="14"><g fill="#e4e4e4"><circle cx="3" cy="2" r="1.500"/><circle cx="3" cy="7" r="1.500"/><circle cx="3" cy="12" r="1.500"/></g></svg>
<div class="t" style="left:288px;top:132px;color:#cfcfcf;letter-spacing:-.2px">Perspective</div>
<svg style="left:0;top:0" width="1500" height="200">
<path d="M1187 161V148" stroke="#86c800" stroke-width="2.500"/>
<path d="M1187 161L1196 156" stroke="#a84048" stroke-width="2.500"/>
<path d="M1187 161L1204 166" stroke="#2a8cf0" stroke-width="2.500"/>
<circle cx="1166" cy="155" r="6.800" fill="#1e63a8"/>
<circle cx="1198" cy="151" r="6.800" fill="#a03c48"/>
<circle cx="1187" cy="141" r="7" fill="#86c800"/>
<circle cx="1208" cy="167" r="7" fill="#2a8cf0"/>
<circle cx="1175" cy="171" r="6.300" fill="#b01c32" stroke="#e0445a" stroke-width="1.200"/>
<circle cx="1187" cy="182" r="7" fill="#5c8a10"/>
<g font-family="Liberation Sans" font-size="10" font-weight="bold" text-anchor="middle"><text x="1187" y="144.500" fill="#2a3a00">Y</text><text x="1198" y="154.500" fill="#6a2a30">X</text><text x="1208" y="170.500" fill="#0a2a50">Z</text></g>
</svg>

<!-- BOTTOM BAR -->
<div class="b" style="left:261px;top:800px;width:967px;height:33px;background:#383d43;border-radius:2px"></div>
<div class="b" style="left:261px;top:798px;width:967px;height:3px;background:#1c1e22"></div>
<div class="t c" style="left:268px;top:809px">Output</div>
<div class="t c" style="left:319px;top:809px">Debugger</div>
<div class="t c" style="left:385px;top:809px">Audio</div>
<div class="t c" style="left:429px;top:809px">Animation</div>
<div class="t c" style="left:496px;top:809px">Shader Editor</div>
<svg style="left:1149px;top:810px" width="13" height="13"><path d="M2 10c2-1 2-3 3-5s3-4 5-3 1 3 1 5 0 3-1 4-2 0-3 0-4 1-5-1z" fill="#e4e4e4"/></svg>
<div class="t" style="left:1169px;top:809px;color:#8f9397">4.3.stable</div>

<!-- INSPECTOR -->
<div class="b" style="left:1231px;top:69px;width:262px;height:764px;background:#383d43;border-radius:3px"></div>
<div class="b" style="left:1231px;top:69px;width:262px;height:23px;background:#2b2f34"></div>
<div class="b" style="left:1231px;top:69px;width:66px;height:23px;background:#383d43;border-top:1px solid #58a6d2;box-sizing:border-box"></div>
<div class="t" style="left:1238px;top:71px">Inspector</div>
<div class="t d" style="left:1306px;top:71px">Node</div>
<div class="t d" style="left:1352px;top:71px">History</div>
<svg style="left:1484px;top:74px" width="6" height="14"><g fill="#8a8d90"><circle cx="3" cy="2" r="1.300"/><circle cx="3" cy="6.500" r="1.300"/><circle cx="3" cy="11" r="1.300"/></g></svg>
<svg style="left:1236px;top:98px" width="252" height="16">
<path d="M3 1h6l3 3v5H8v5H3z" fill="#e0e0e0"/><path d="M9 11h5M11.500 8.500v5.500" stroke="#5fe05f" stroke-width="1.800"/>
<path d="M28 4h4l1 2h5v7H28z" fill="#d8d8d8"/><path d="M28 13l2-5h9l-2 5z" fill="#9a9a9a"/>
<path d="M54 2h9l2 2v9H54z" fill="#8a8d90"/><rect x="56" y="2.500" width="6" height="4" fill="#383d43"/><rect x="56" y="9" width="7" height="4" fill="#383d43"/>
<g fill="#e0e0e0"><circle cx="84" cy="2.500" r="1.400"/><circle cx="84" cy="7.500" r="1.400"/><circle cx="84" cy="12.500" r="1.400"/></g>
<path d="M204 2l-4 5.500 4 5.500" fill="none" stroke="#e0e0e0" stroke-width="1.700"/>
<path d="M219 2l4 5.500-4 5.500" fill="none" stroke="#6d7075" stroke-width="1.700"/>
<path d="M243 13c4 0 5-3 5-5 0-3-2-5-5-5s-5 2-5 5M236 6l2 3 2.500-2.500M243 5v4h3" fill="none" stroke="#e0e0e0" stroke-width="1.500"/>
</svg>
<div class="b" style="left:1233px;top:120px;width:232px;height:23px;background:#24272c;border-radius:2px"></div>
<div class="b" style="left:1233px;top:147px;width:232px;height:22px;background:#24272c;border-radius:2px"></div>
<svg style="left:1236px;top:124px" width="250" height="40">
<use href="#m" x="1" y="1" width="13" height="13"/>
<path d="M214 5l4 4 4-4" fill="none" stroke="#e0e0e0" stroke-width="1.500"/>
<circle cx="245" cy="3.500" r="3" fill="none" stroke="#d8d8d8" stroke-width="1.300"/><path d="M243 6l-3 3" stroke="#d8d8d8" stroke-width="1.500"/><rect x="237" y="9" width="14" height="4" fill="#d8d8d8"/>
<circle cx="213" cy="32" r="3.500" fill="none" stroke="#e0e0e0" stroke-width="1.600"/><path d="M216 35l4 4" stroke="#e0e0e0" stroke-width="2"/>
<path d="M241 27v14M248 27v14" stroke="#e0e0e0" stroke-width="1.800"/><rect x="239" y="35" width="4" height="4" fill="#e0e0e0"/><rect x="246" y="29" width="4" height="4" fill="#e0e0e0"/>
</svg>
<div class="t c" style="left:1255px;top:123px">pedestrian_crossing</div>
<div class="t" style="left:1238px;top:150px;color:#8a8e92">Filter Properties</div>
<div class="b" style="left:1233px;top:173px;width:257px;height:657px;background:#24272c;border-radius:2px"></div>
<div class="b" style="left:1236px;top:246px;width:251px;height:387px;background:#2d3036"></div>
<div class="b" style="left:1464px;top:624px;width:23px;height:22px;background:#282b30"></div>
<div class="b" style="left:1466px;top:202px;width:22px;height:38px;background:#282b30"></div>

<div class="cat" style="top:176px"></div><div class="cat" style="top:284px"></div><div class="cat" style="top:360px"></div><div class="cat" style="top:469px"></div><div class="cat" style="top:526px"></div>
<div class="t h" style="left:1324px;top:177px">MeshInstance3D</div>
<div class="t h" style="left:1311px;top:285px">GeometryInstance3D</div>
<div class="t h" style="left:1321px;top:361px">VisualInstance3D</div>
<div class="t h" style="left:1347px;top:470px">Node3D</div>
<div class="t h" style="left:1355px;top:527px">Node</div>
<svg style="left:1230px;top:175px" width="270" height="480">
<use href="#m" x="76" y="4" width="13" height="13"/>
<path d="M66 113h10v9H66z" fill="none" stroke="#c06060" stroke-width="1.700"/><path d="M65 112h3v3h-3zM75 112h3v3h-3zM65 121h3v3h-3zM75 121h3v3h-3z" fill="#c06060"/>
<g fill="#d86a6a"><circle cx="77" cy="191" r="1.700"/><circle cx="88" cy="191" r="1.700"/><circle cx="77" cy="200" r="1.700"/><circle cx="88" cy="200" r="1.700"/></g>
<circle cx="106" cy="303" r="3.800" fill="none" stroke="#f2706e" stroke-width="1.700"/>
<circle cx="114" cy="361" r="3.800" fill="none" stroke="#e4e4e4" stroke-width="1.700"/>
<path d="M118 50c2 1 5-1 5-3.500s-2-4.500-4.500-4.500c-2 0-3 1-4 2M114.500 41v4h4" fill="none" stroke="#e4e4e4" stroke-width="1.500"/>
<g fill="#f5c542"><circle cx="139" cy="41" r="1.700"/><circle cx="148" cy="41" r="1.700"/><circle cx="139" cy="50" r="1.700"/></g><path d="M146.500 45.500v8M142.500 49.500h8" stroke="#f5c542" stroke-width="1.700"/>
<path d="M243 44l3.500 3.500 3.500-3.500" fill="none" stroke="#a0a0a0" stroke-width="1.300"/>
<path d="M243 458l3.500 3.500 3.500-3.500" fill="none" stroke="#a0a0a0" stroke-width="1.300"/>
<g fill="none" stroke="#9a9da0" stroke-width="1.300"><path d="M12 76.500l3 3-3 3M12 95.500l3 3-3 3M12 133.500l3 3-3 3M12 152.500l3 3-3 3M12 171.500l3 3-3 3M12 280.500l3 3-3 3M12 318.500l3 3-3 3M12 337.500l3 3-3 3M12 375.500l3 3-3 3M12 394.500l3 3-3 3M12 413.500l3 3-3 3M12 433l3 3-3 3"/></g>
</svg>
<div class="t" style="left:1242px;top:212px;color:#8f9397">Mesh</div>
<div class="t h" style="left:1249px;top:247px">Skeleton</div>
<div class="t" style="left:1430px;top:247px;color:#6f7479">(1 change)</div>
<div class="t h" style="left:1249px;top:266px">Surface Material Override</div>
<div class="t h" style="left:1249px;top:304px">Geometry</div>
<div class="t h" style="left:1249px;top:323px">Global Illumination</div>
<div class="t h" style="left:1249px;top:342px">Visibility Range</div>
<div class="t" style="left:1243px;top:381px;color:#8f9397">Layers</div>
<div class="b" style="left:1236px;top:402px;width:251px;height:48px;background:#222529"></div>
<div class="cell" style="left:1239px;top:407px;background:#3b8fbd;color:#d5e7f1">1</div>
<div class="cell" style="left:1259px;top:407px">2</div><div class="cell" style="left:1279px;top:407px">3</div><div class="cell" style="left:1299px;top:407px">4</div><div class="cell" style="left:1319px;top:407px">5</div>
<div class="cell" style="left:1341px;top:407px">11</div><div class="cell" style="left:1361px;top:407px">12</div><div class="cell" style="left:1381px;top:407px">13</div><div class="cell" style="left:1401px;top:407px">14</div><div class="cell" style="left:1421px;top:407px">15</div>
<div class="cell" style="left:1239px;top:427px">6</div><div class="cell" style="left:1259px;top:427px">7</div><div class="cell" style="left:1279px;top:427px">8</div><div class="cell" style="left:1299px;top:427px">9</div><div class="cell" style="left:1319px;top:427px">10</div>
<div class="cell" style="left:1341px;top:427px">16</div><div class="cell" style="left:1361px;top:427px">17</div><div class="cell" style="left:1381px;top:427px">18</div><div class="cell" style="left:1401px;top:427px">19</div><div class="cell" style="left:1421px;top:427px">20</div>
<svg style="left:1478px;top:419px" width="6" height="14"><g fill="#e0e0e0"><circle cx="3" cy="2" r="1.500"/><circle cx="3" cy="7" r="1.500"/><circle cx="3" cy="12" r="1.500"/></g></svg>
<div class="t h" style="left:1249px;top:451px">Sorting</div>
<div class="t h" style="left:1249px;top:489px">Transform</div>
<div class="t" style="left:1430px;top:489px;color:#6f7479">(1 change)</div>
<div class="t h" style="left:1249px;top:508px">Visibility</div>
<div class="t h" style="left:1249px;top:546px">Process</div>
<div class="t h" style="left:1249px;top:565px">Physics Interpolation</div>
<div class="t h" style="left:1249px;top:584px">Auto Translate</div>
<div class="t h" style="left:1249px;top:604px">Editor Description</div>
<div class="t" style="left:1242px;top:625px;color:#8f9397">Script</div>
<div class="t c" style="left:1391px;top:626px">&lt;empty&gt;</div>
<div class="b" style="left:1290px;top:649px;width:143px;height:24px;background:#383c42;border-radius:2px"></div>
<svg style="left:1295px;top:655px" width="14" height="13"><path d="M0 6.500h12M6 .5v12" stroke="#e8e8e8" stroke-width="1.800"/></svg>
<div class="t c" style="left:1333px;top:653px">Add Metadata</div>

</div></body></html>
